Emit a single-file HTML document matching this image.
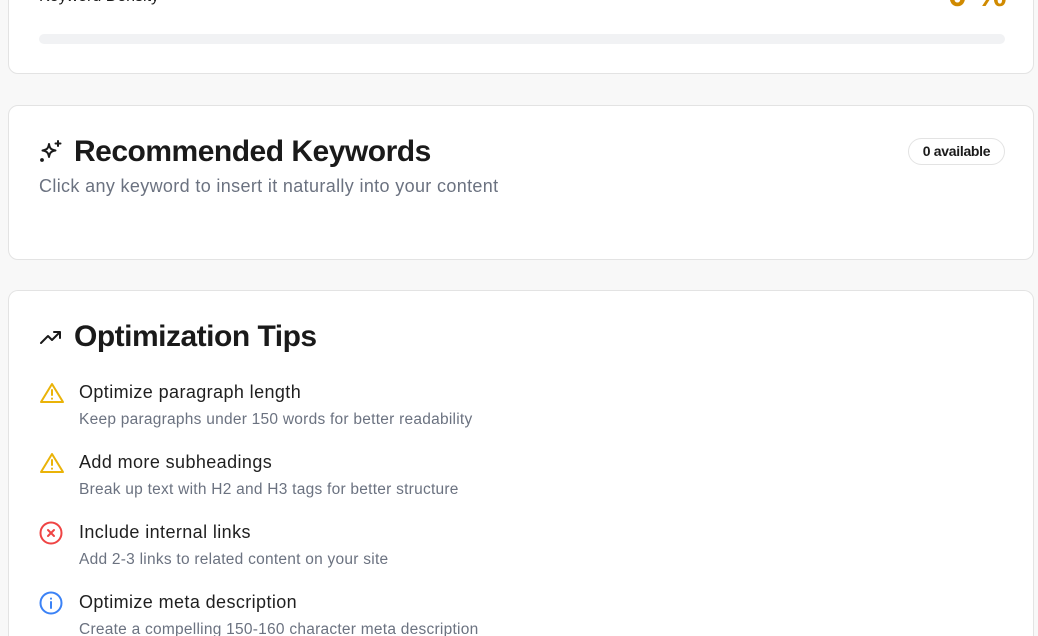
<!DOCTYPE html>
<html style="height:636px;overflow:hidden"><head><style>
body{margin:0;width:1038px;height:636px;overflow:hidden;background:#f8f8f8;font-family:"Liberation Sans",sans-serif;color:#1a1a1a;position:relative}
.card{position:absolute;left:8px;width:1026px;background:#fff;border:1px solid #e3e3e3;border-radius:10px;box-sizing:border-box}
.abs{position:absolute;white-space:nowrap}
h2{margin:0;font-size:30px;font-weight:600;letter-spacing:-0.5px}
.t{font-size:18px;color:#1f1f1f;letter-spacing:0.4px}
.d{font-size:15.5px;color:#6b7280;letter-spacing:0.25px}
</style></head><body>
<div class="card" style="top:-40px;height:114px"></div>
<div class="abs" style="left:39px;top:-12px;font-size:16px;font-weight:500">Keyword Density</div>
<div class="abs" style="left:948px;top:-24px;font-size:34px;font-weight:700;color:#d08a00">0 %</div>
<div class="abs" style="left:39px;top:34px;width:966px;height:10px;background:#f1f2f4;border-radius:5px"></div>

<div class="card" style="top:105px;height:155px"></div>
<svg class="abs" style="left:38px;top:139px" width="26" height="26" viewBox="0 0 26 26" fill="none" stroke="#1a1a1a" stroke-width="2" stroke-linejoin="round" stroke-linecap="round"><path d="M11 5c.8 4.5 2 5.7 6.5 6.5-4.5.8-5.7 2-6.5 6.5-.8-4.5-2-5.7-6.5-6.5 4.5-.8 5.7-2 6.5-6.5z"/><path d="M20 2v5M17.5 4.5h5"/><circle cx="4" cy="21" r="0.9" fill="#1a1a1a"/></svg>
<h2 class="abs" style="left:74px;top:135px">Recommended Keywords</h2>
<div class="abs" style="left:39px;top:176px;font-size:18px;color:#6b7280;letter-spacing:0.35px">Click any keyword to insert it naturally into your content</div>
<div class="abs" style="left:908px;top:138px;width:97px;height:27px;box-sizing:border-box;border:1px solid #e3e3e3;border-radius:14px;font-size:14px;font-weight:600;text-align:center;line-height:25px;letter-spacing:-0.3px">0 available</div>

<div class="card" style="top:290px;height:346px;border-bottom:none;border-radius:10px 10px 0 0"></div>
<svg class="abs" style="left:39px;top:327px" width="24" height="20" viewBox="0 0 24 20" fill="none" stroke="#1a1a1a" stroke-width="2" stroke-linecap="round" stroke-linejoin="round"><path d="M2 16l7-7 4 4 8-8M15 5h6v6"/></svg>
<h2 class="abs" style="left:74px;top:320px">Optimization Tips</h2>

<svg class="abs" style="left:39px;top:382px" width="26" height="22" viewBox="0 0 26 22" fill="none" stroke="#eab308" stroke-width="2" stroke-linejoin="round" stroke-linecap="round"><path d="M13 2L24 20H2z"/><path d="M13 8v5M13 16.5v.3"/></svg>
<div class="abs t" style="left:79px;top:382px">Optimize paragraph length</div>
<div class="abs d" style="left:79px;top:411px">Keep paragraphs under 150 words for better readability</div>

<svg class="abs" style="left:39px;top:452px" width="26" height="22" viewBox="0 0 26 22" fill="none" stroke="#eab308" stroke-width="2" stroke-linejoin="round" stroke-linecap="round"><path d="M13 2L24 20H2z"/><path d="M13 8v5M13 16.5v.3"/></svg>
<div class="abs t" style="left:79px;top:452px">Add more subheadings</div>
<div class="abs d" style="left:79px;top:481px">Break up text with H2 and H3 tags for better structure</div>

<svg class="abs" style="left:39px;top:521px" width="24" height="24" viewBox="0 0 24 24" fill="none" stroke="#ef4444" stroke-width="2" stroke-linecap="round"><circle cx="12" cy="12" r="10.5"/><path d="M9 9l6 6M15 9l-6 6"/></svg>
<div class="abs t" style="left:79px;top:522px">Include internal links</div>
<div class="abs d" style="left:79px;top:551px">Add 2-3 links to related content on your site</div>

<svg class="abs" style="left:39px;top:591px" width="24" height="24" viewBox="0 0 24 24" fill="none" stroke="#3b82f6" stroke-width="2" stroke-linecap="round"><circle cx="12" cy="12" r="10.5"/><path d="M12 11v6M12 7.5v.3"/></svg>
<div class="abs t" style="left:79px;top:592px">Optimize meta description</div>
<div class="abs d" style="left:79px;top:621px">Create a compelling 150-160 character meta description</div>
</body></html>
